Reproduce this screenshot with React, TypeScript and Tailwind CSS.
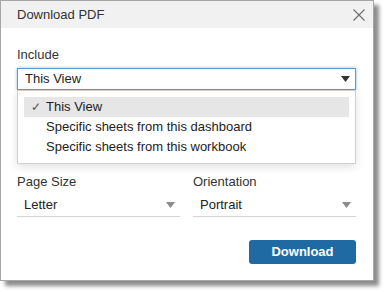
import { useState } from "react";

const options = [
  "This View",
  "Specific sheets from this dashboard",
  "Specific sheets from this workbook",
];

const Caret = ({ dark }: { dark?: boolean }) => (
  <svg width="9" height="6" viewBox="0 0 9 6" className="shrink-0">
    <path d="M0 0 L9 0 L4.5 6 Z" fill={dark ? "#333333" : "#8a8a8a"} />
  </svg>
);

const UnderlineSelect = ({ label, value }: { label: string; value: string }) => (
  <div className="flex flex-col">
    <div className="text-[13px] leading-[15px] text-[#333]">{label}</div>
    <div className="mt-[4px] h-[24px] flex items-center justify-between pl-[7px] pr-[5px] border-b border-[#d4d4d4]">
      <span className="text-[13px] text-[#222]">{value}</span>
      <Caret />
    </div>
  </div>
);

export default function App() {
  const [include, setInclude] = useState("This View");

  return (
    <div className="w-[385px] h-[292px] bg-white" style={{ fontFamily: '"Liberation Sans", Arial, sans-serif' }}>
      <div className="w-[374px] h-[281px] bg-white border border-[#a6a6a6] shadow-[5px_5px_4px_rgba(0,0,0,0.45)] flex flex-col">
        <div className="h-[27px] bg-[#f1f1f1] flex items-center justify-between pl-[16px] pr-[8px]">
          <span className="text-[13px] text-[#333]">Download PDF</span>
          <svg width="12" height="12" viewBox="0 0 12 12">
            <path d="M0.5 0.5 L11.5 11.5 M11.5 0.5 L0.5 11.5" stroke="#6b6b6b" strokeWidth="1.1" />
          </svg>
        </div>

        <div className="flex-1 flex flex-col pl-[16px] pr-[17px] pt-[19px]">
          <div className="text-[13px] leading-[15px] text-[#333]">Include</div>
          <div className="relative mt-[6px]">
            <div className="h-[22px] flex items-center justify-between pl-[7px] pr-[5px] border border-[#5b9bd5] shadow-[0_0_3px_rgba(91,155,213,0.7)] bg-white">
              <span className="text-[13px] text-[#222]">{include}</span>
              <Caret dark />
            </div>
            <div className="absolute left-0 right-0 top-[22px] z-10 bg-white border border-[#cfcfcf] shadow-[0_3px_8px_rgba(0,0,0,0.12)] px-[6px] pt-[6px] pb-[6px]">
              {options.map((o) => (
                <div
                  key={o}
                  onClick={() => setInclude(o)}
                  className={`h-[20px] flex items-center text-[13px] text-[#222] ${o === include ? "bg-[#e6e6e6]" : ""}`}
                >
                  <span className="w-[22px] pl-[7px] text-[12px] text-[#555]">{o === include ? "✓" : ""}</span>
                  <span>{o}</span>
                </div>
              ))}
            </div>
          </div>

          <div className="mt-[84px] grid grid-cols-2 gap-[13px]">
            <UnderlineSelect label="Page Size" value="Letter" />
            <UnderlineSelect label="Orientation" value="Portrait" />
          </div>

          <div className="flex justify-end mt-[23px]">
            <button className="w-[107px] h-[24px] rounded-[3px] bg-[#1f6aa3] text-white text-[13px] font-bold">
              Download
            </button>
          </div>
        </div>
      </div>
    </div>
  );
}
